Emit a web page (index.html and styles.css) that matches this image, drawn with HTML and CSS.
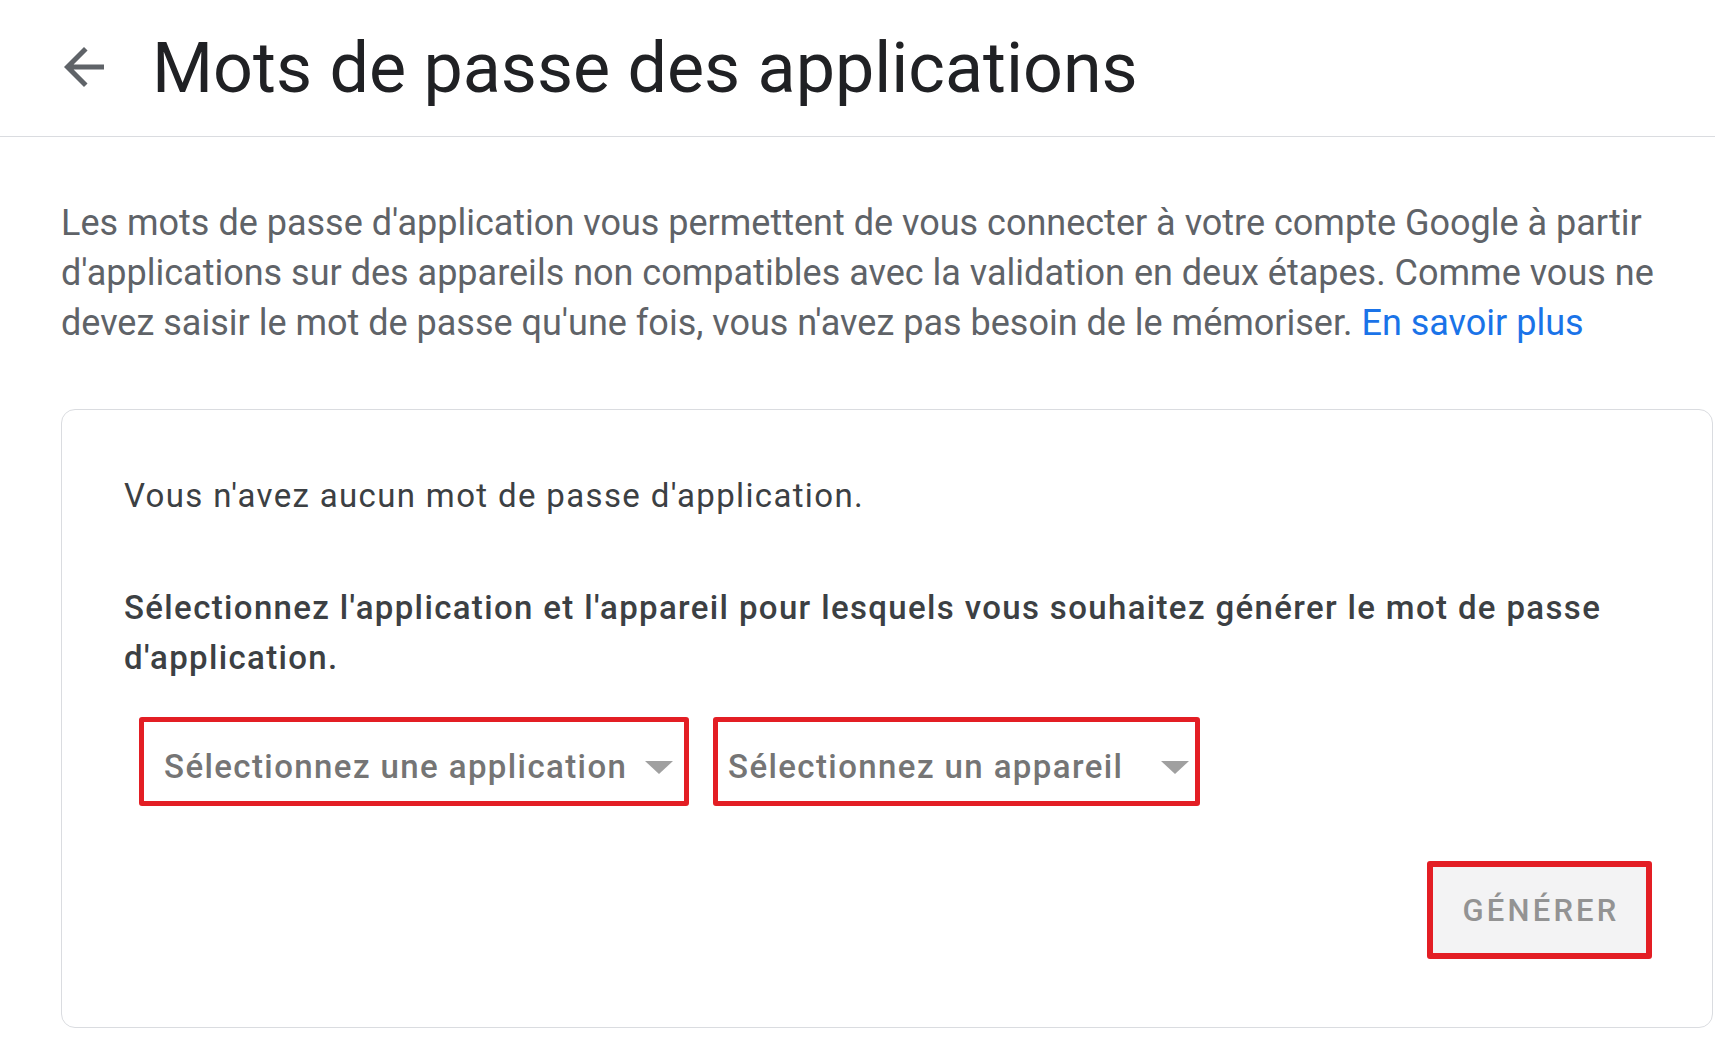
FILE: index.html
```html
<!DOCTYPE html>
<html lang="fr">
<head>
<meta charset="utf-8">
<title>Mots de passe des applications</title>
<link rel="stylesheet" href="styles.css">
</head>
<body>
<header class="topbar">
  <svg class="back" viewBox="0 0 24 24" width="60" height="60" aria-hidden="true"><path d="M20 11H7.83l5.59-5.59L12 4l-8 8 8 8 1.41-1.41L7.83 13H20v-2z" fill="#5f6368"/></svg>
  <h1 class="title">Mots de passe des applications</h1>
</header>
<main class="content">
  <p class="intro">Les mots de passe d'application vous permettent de vous connecter à votre compte Google à partir d'applications sur des appareils non compatibles avec la validation en deux étapes. Comme vous ne devez saisir le mot de passe qu'une fois, vous n'avez pas besoin de le mémoriser. <a class="link" href="#">En savoir plus</a></p>
  <section class="card">
    <p class="empty">Vous n'avez aucun mot de passe d'application.</p>
    <p class="instr">Sélectionnez l'application et l'appareil pour lesquels vous souhaitez générer le mot de passe d'application.</p>
    <div class="selects">
      <div class="select select-app"><span>Sélectionnez une application</span><span class="tri"></span></div>
      <div class="select select-dev"><span>Sélectionnez un appareil</span><span class="tri"></span></div>
    </div>
    <div class="actions">
      <div class="btn">GÉNÉRER</div>
    </div>
  </section>
</main>
</body>
</html>
```
FILE: styles.css
```css
html, body {
  margin: 0;
  padding: 0;
  background: #fff;
  font-family: Roboto, "Liberation Sans", sans-serif;
}
.topbar {
  box-sizing: border-box;
  height: 137px;
  border-bottom: 1px solid #dadce0;
  display: flex;
  align-items: center;
  padding-left: 54px;
}
.back {
  display: block;
  flex: none;
  margin-top: -2px;
}
.title {
  margin: 0 0 0 38px;
  font-weight: 400;
  font-size: 70px;
  line-height: 1;
  color: #202124;
}
.content {
  padding: 61px 2px 0 61px;
}
.intro {
  margin: 0;
  width: 1620px;
  font-size: 36px;
  line-height: 50px;
  color: #5f6368;
}
.link {
  color: #1a73e8;
  text-decoration: none;
}
.card {
  margin-top: 61px;
  border: 1px solid #dadce0;
  border-radius: 14px;
  padding: 61px 60px 68px 62px;
}
.empty {
  margin: 0;
  font-size: 33px;
  letter-spacing: 1.35px;
  line-height: 50px;
  color: #3c4043;
}
.instr {
  margin: 62px 0 0 0;
  font-size: 33px;
  letter-spacing: 1.35px;
  line-height: 50px;
  font-weight: 500;
  color: #3c4043;
}
.selects {
  display: flex;
  gap: 24px;
  margin: 34px 0 0 15px;
}
.select {
  box-sizing: border-box;
  height: 89px;
  border: 5px solid #e31e24;
  border-radius: 3px;
  display: flex;
  align-items: center;
  justify-content: space-between;
  font-size: 33px;
  letter-spacing: 1.4px;
  font-weight: 500;
  color: #757575;
  padding-top: 10px;
}
.select-app {
  width: 550px;
  padding-left: 20px;
  padding-right: 11px;
}
.select-dev {
  width: 487px;
  padding-left: 10px;
  padding-right: 6px;
}
.tri {
  width: 0;
  height: 0;
  border-left: 14px solid transparent;
  border-right: 14px solid transparent;
  border-top: 13px solid #a0a0a0;
  margin-top: 2px;
}
.actions {
  display: flex;
  justify-content: flex-end;
  margin-top: 55px;
}
.btn {
  box-sizing: border-box;
  width: 225px;
  height: 98px;
  border: 6px solid #e31e24;
  border-radius: 3px;
  background: #f3f3f4;
  color: #939393;
  font-size: 31px;
  letter-spacing: 3.2px;
  font-weight: 500;
  display: flex;
  align-items: center;
  justify-content: center;
  padding-left: 3px;
}
```
